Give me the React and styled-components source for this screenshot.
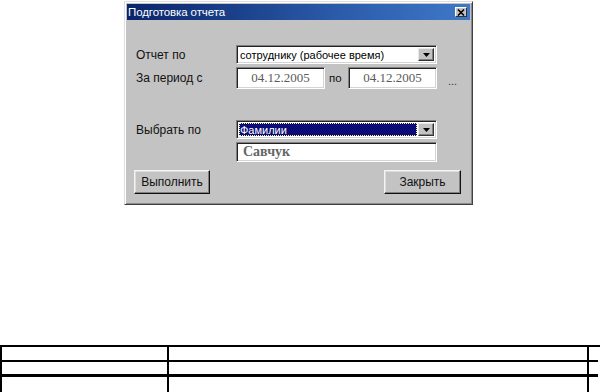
import React from "react";
import styled, { createGlobalStyle } from "styled-components";

const Global = createGlobalStyle`
  html, body { margin: 0; padding: 0; background: #fff; }
  body { font-family: "Liberation Sans", Arial, sans-serif; width: 600px; height: 392px; overflow: hidden; }
`;

const Page = styled.div`
  width: 600px;
  height: 392px;
  display: flex;
  flex-direction: column;
`;

const Dialog = styled.div`
  margin: 1px 0 0 124px;
  width: 349px;
  height: 204px;
  box-sizing: border-box;
  background: #c3c3c3;
  border: 1px solid;
  border-color: #dedede #404040 #404040 #dedede;
  box-shadow: inset 1px 1px 0 #fff, inset -1px -1px 0 #8a8a8a;
  padding: 2px;
  display: flex;
  flex-direction: column;
`;

const TitleBar = styled.div`
  height: 16px;
  background: linear-gradient(90deg, #0a246a 0%, #2a5aa8 60%, #3f78c8 100%);
  display: flex;
  align-items: center;
  justify-content: space-between;
  padding: 0 3px 0 1px;
`;

const Title = styled.span`
  color: #fff;
  font-size: 11.5px;
  letter-spacing: -0.1px;
`;

const CloseBtn = styled.div`
  width: 12px;
  height: 10px;
  background: #c3c3c3;
  box-sizing: border-box;
  border: 1px solid;
  border-color: #fff #333 #333 #fff;
  display: flex;
  align-items: center;
  justify-content: center;
`;

const Form = styled.div`
  display: grid;
  grid-template-columns: 100px 201px auto;
  grid-template-rows: 19px 22px 25px 19px 20px;
  row-gap: 3px;
  padding: 25px 0 0 9px;
  align-items: center;
`;

const Label = styled.div`
  font-size: 12px;
  color: #111;
  grid-column: 1;
`;

const Combo = styled.div`
  grid-column: 2;
  height: 19px;
  box-sizing: border-box;
  background: #fff;
  border: 1px solid;
  border-color: #808080 #fff #fff #808080;
  box-shadow: inset 1px 1px 0 #222, inset -1px -1px 0 #d4d4d4;
  display: flex;
  align-items: stretch;
  padding: 2px;
`;

const ComboText = styled.div`
  flex: 1;
  font-size: 11px;
  display: flex;
  align-items: center;
  padding-left: 1px;
  color: ${(p) => (p.$selected ? "#fff" : "#000")};
  background: ${(p) => (p.$selected ? "#0c0c78" : "transparent")};
  outline: ${(p) => (p.$selected ? "1px dotted #ffff90" : "none")};
  outline-offset: -1px;
  margin-right: 1px;
`;

const ArrowBtn = styled.div`
  width: 16px;
  box-sizing: border-box;
  background: #c3c3c3;
  border: 1px solid;
  border-color: #e8e8e8 #333 #333 #e8e8e8;
  box-shadow: inset -1px -1px 0 #808080;
  display: flex;
  align-items: center;
  justify-content: center;
`;

const DateRow = styled.div`
  grid-column: 2;
  display: flex;
  align-items: center;
  height: 22px;
`;

const Field = styled.div`
  box-sizing: border-box;
  height: ${(p) => p.$h || 22}px;
  width: ${(p) => (p.$w ? `${p.$w}px` : "auto")};
  background: #fff;
  border: 1px solid;
  border-color: #808080 #fff #fff #808080;
  box-shadow: inset 1px 1px 0 #222, inset -1px -1px 0 #d4d4d4;
  font-family: "Liberation Serif", "Times New Roman", serif;
  color: ${(p) => (p.$bold ? "#666" : "#5a5a5a")};
  display: flex;
  align-items: center;
  justify-content: ${(p) => (p.$center ? "center" : "flex-start")};
  padding-left: ${(p) => (p.$center ? 0 : 6)}px;
  font-size: ${(p) => p.$fs || 13}px;
  font-weight: ${(p) => (p.$bold ? 700 : 400)};
`;

const Po = styled.span`
  width: 23px;
  font-size: 11.5px;
  color: #111;
  padding-left: 4px;
  box-sizing: border-box;
`;

const Dots = styled.span`
  grid-column: 3;
  font-size: 11px;
  color: #333;
  padding-left: 11px;
  align-self: center;
  padding-top: 5px;
`;

const FieldCell = styled.div`
  grid-column: 2;
`;

const Buttons = styled.div`
  display: flex;
  justify-content: space-between;
  padding: 8px 9px 0 7px;
`;

const Button = styled.div`
  width: ${(p) => p.$w}px;
  height: 24px;
  box-sizing: border-box;
  background: #c3c3c3;
  border: 1px solid;
  border-color: #f4f4f4 #111 #111 #f4f4f4;
  box-shadow: inset -1px -1px 0 #808080, inset 1px 1px 0 #dcdcdc;
  font-size: 12px;
  color: #111;
  display: flex;
  align-items: center;
  justify-content: center;
`;

const Spacer = styled.div`
  flex: 1;
`;

const Table = styled.div`
  display: grid;
  grid-template-columns: 167px 420px 9px;
  grid-template-rows: 15px 15px 15px;
  width: 598px;
  border-top: 2px solid #000;
  border-left: 2px solid #000;
`;

const Cell = styled.div`
  box-sizing: border-box;
  border-right: ${(p) => (p.$noRight ? "0" : "2px solid #000")};
  border-bottom: ${(p) => p.$bb}px solid #000;
  background: #fff;
`;

const Arrow = () => (
  <svg width="7" height="4" viewBox="0 0 7 4"><path d="M0 0h7L3.5 4z" fill="#000" /></svg>
);

const X = () => (
  <svg width="8" height="7" viewBox="0 0 8 7"><path d="M1 0.5l6 6M7 0.5l-6 6" stroke="#000" strokeWidth="1.6" /></svg>
);

export default function App() {
  const rows = [2, 3, 0];
  return (
    <Page>
      <Global />
      <Dialog>
        <TitleBar>
          <Title>Подготовка отчета</Title>
          <CloseBtn><X /></CloseBtn>
        </TitleBar>
        <Form>
          <Label>Отчет по</Label>
          <Combo>
            <ComboText>сотруднику (рабочее время)</ComboText>
            <ArrowBtn><Arrow /></ArrowBtn>
          </Combo>
          <div />
          <Label>За период с</Label>
          <DateRow>
            <Field $w={89} $center>04.12.2005</Field>
            <Po>по</Po>
            <Field $w={89} $center>04.12.2005</Field>
          </DateRow>
          <Dots>...</Dots>
          <div />
          <div />
          <div />
          <Label>Выбрать по</Label>
          <Combo>
            <ComboText $selected>Фамилии</ComboText>
            <ArrowBtn><Arrow /></ArrowBtn>
          </Combo>
          <div />
          <div />
          <FieldCell>
            <Field $h={20} $fs={14} $bold>Савчук</Field>
          </FieldCell>
        </Form>
        <Buttons>
          <Button $w={76}>Выполнить</Button>
          <Button $w={77}>Закрыть</Button>
        </Buttons>
      </Dialog>
      <Spacer />
      <Table>
        {rows.map((bb, i) => (
          <React.Fragment key={i}>
            <Cell $bb={bb} />
            <Cell $bb={bb} />
            <Cell $bb={bb} $noRight />
          </React.Fragment>
        ))}
      </Table>
    </Page>
  );
}
